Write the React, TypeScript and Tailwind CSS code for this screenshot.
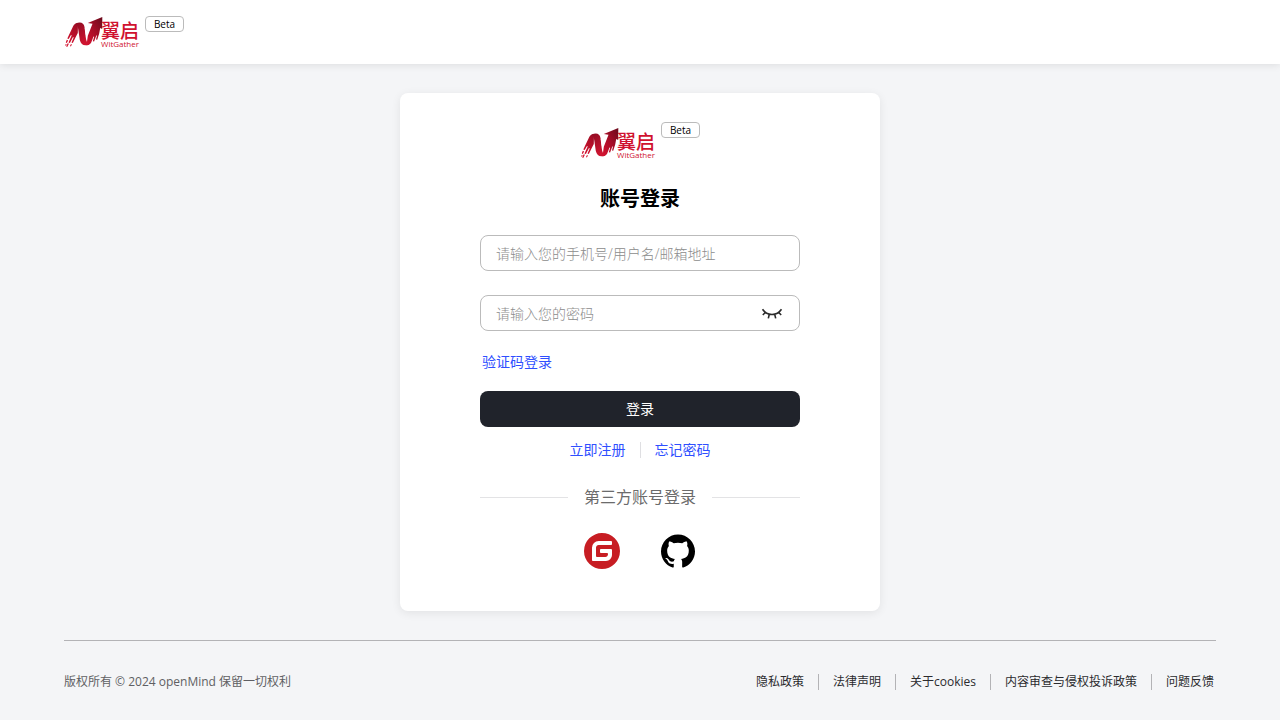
import { useState } from "react";
import { SiGitee, SiGithub } from "react-icons/si";

function LogoMark() {
  return (
    <svg width="76" height="32" viewBox="-1 -1 76 32" role="img" aria-label="翼启 WitGather">
      <defs>
        <linearGradient id="wingLeft" x1="0.6" y1="0" x2="0.2" y2="1">
          <stop offset="0" stopColor="#a00d25" />
          <stop offset="1" stopColor="#d3122f" />
        </linearGradient>
        <linearGradient id="wingBand" x1="0" y1="0" x2="0.4" y2="1">
          <stop offset="0" stopColor="#8f0c22" />
          <stop offset="1" stopColor="#cf1430" />
        </linearGradient>
        <linearGradient id="wingArrow" x1="0.1" y1="1" x2="0.9" y2="0">
          <stop offset="0" stopColor="#d3122f" />
          <stop offset="0.5" stopColor="#a80d27" />
          <stop offset="1" stopColor="#6e0a1c" />
        </linearGradient>
      </defs>
      <path
        d="M13 6C10.500 6 9 7.500 8 9.500L2.300 21.500l1.400.6L6 18l.7.400-3.200 7 1.400.7L8 20l.7.400-2.200 5 1.300.6 2.700-5.500 2.300-4.500z"
        fill="url(#wingLeft)"
      />
      <path
        d="M1.800 22.800.8 25.600l1 .4 1.300-2.600zM2.700 26.200l-1.500 3.300 1 .5 1.700-3.300zM6 27l-1 2 .9.400 1-2zM.7 27l-.5 1.500.8.300.7-1.500z"
        fill="#d3122f"
      />
      <path
        d="M21.500 28.300c3.200 0 4.500-2 5.300-4.300l1.700-4.500.7.300-1.400 4.400 1.300.4 2.200-6.200.7.200-1 3.800 1.200.3 2-6.200 1-5.500 2 1L37.300 0 22.800 6l4.700.7-4.700 12z"
        fill="url(#wingArrow)"
      />
      <path
        d="M10.500 6.800C15 4.200 18.800 5.500 19.500 10l1.200 10c.4 3.200 1.200 5.500 3.300 7.500-4.500 2-8 .5-9.200-4.500L13.500 14c-.4-3-.9-5.500-3-7.200z"
        fill="url(#wingBand)"
      />
      <path d="M19.800 11 23.500 9.500 20.800 18z" fill="#fff" />
      <text x="36" y="21" fontSize="19" fontWeight="500" fill="#d0122f" fontFamily="'Noto Sans CJK SC', sans-serif">
        翼启
      </text>
      <text x="36" y="30" fontSize="8" fill="#d0122f" fontFamily="'Open Sans', sans-serif">
        WitGather
      </text>
    </svg>
  );
}

function Beta() {
  return (
    <span className="flex h-4 w-[39px] items-center justify-center rounded-[4px] border border-[#bbbbbb] bg-white text-[10px] leading-none text-black">
      Beta
    </span>
  );
}

function ClosedEye() {
  return (
    <svg width="24" height="24" viewBox="0 0 24 24" fill="none" stroke="#2b2b2b" strokeWidth="1.600">
      <path d="M2.500 8.300C5 12 8.300 13.500 12 13.500s7-1.500 9.500-5.200M5.500 11.300 2.800 14M18.500 11.300l2.700 2.700M9.300 13.200l-1 4.200M14.700 13.200l1 4.200" />
    </svg>
  );
}

const policies = ["隐私政策", "法律声明", "关于cookies", "内容审查与侵权投诉政策", "问题反馈"];

export default function App() {
  const [visible, setVisible] = useState(false);

  return (
    <div className="flex min-h-screen flex-col bg-[#f4f5f7] font-['Open_Sans','Noto_Sans_CJK_SC',sans-serif] text-sm text-black">
      <header className="flex h-16 items-center bg-white px-16 shadow-[0_1px_8px_rgba(0,0,0,0.1)]">
        <a href="#" className="flex items-start gap-[5px]">
          <LogoMark />
          <Beta />
        </a>
      </header>

      <main className="flex flex-1 justify-center px-4 py-[29px]">
        <section className="w-full max-w-[480px] rounded-lg bg-white px-20 pt-[29px] pb-10 shadow-[0_2px_10px_rgba(0,0,0,0.08)]">
          <div className="flex items-start justify-center gap-[5px]">
            <div className="pt-[5px]">
              <LogoMark />
            </div>
            <Beta />
          </div>
          <h1 className="mt-[26px] text-center text-xl leading-7 font-bold">账号登录</h1>

          <form className="mt-[22px]" onSubmit={(e) => e.preventDefault()}>
            <input
              type="text"
              aria-label="账号"
              placeholder="请输入您的手机号/用户名/邮箱地址"
              className="block h-9 w-full rounded-lg border border-[#bbbbbb] px-[15px] font-light outline-none placeholder:text-[#8c8c8c]"
            />
            <div className="mt-6 flex h-9 items-center rounded-lg border border-[#bbbbbb] px-[15px]">
              <input
                type={visible ? "text" : "password"}
                aria-label="密码"
                placeholder="请输入您的密码"
                className="h-full min-w-0 flex-1 font-light outline-none placeholder:text-[#8c8c8c]"
              />
              <button type="button" aria-label="显示密码" onClick={() => setVisible(!visible)}>
                <ClosedEye />
              </button>
            </div>
            <a href="#" className="mt-5 ml-0.5 block w-fit leading-[22px] text-[#2f4fff]">
              验证码登录
            </a>
            <button type="submit" className="mt-[18px] h-9 w-full rounded-lg bg-[#20232b] text-white">
              登录
            </button>
          </form>

          <div className="mt-3 flex items-center justify-center gap-[14px] leading-[22px] text-[#2f4fff]">
            <a href="#">立即注册</a>
            <span className="h-4 w-px bg-[#dfdfe2]" />
            <a href="#">忘记密码</a>
          </div>

          <div className="mt-6 flex items-center gap-4 text-base leading-6 text-[#6b6b6b]">
            <span className="h-px flex-1 bg-[#e3e3e5]" />
            第三方账号登录
            <span className="h-px flex-1 bg-[#e3e3e5]" />
          </div>

          <div className="mt-6 flex items-center justify-center gap-10">
            <a href="#" aria-label="Gitee">
              <SiGitee size={36} color="#c71d23" />
            </a>
            <a href="#" aria-label="GitHub" className="flex size-9 items-center justify-center">
              <SiGithub size={34} />
            </a>
          </div>
        </section>
      </main>

      <footer className="mx-16 flex h-20 items-center justify-between border-t border-[#b3b3b6] pt-0.5 pr-0.5 text-xs">
        <p className="text-[#5f5f63]">版权所有 © 2024 openMind 保留一切权利</p>
        <nav className="flex items-center">
          {policies.map((name) => (
            <a
              key={name}
              href="#"
              className="border-l border-[#b3b3b6] px-[14px] leading-4 text-[#2b2b2e] first:border-l-0 last:pr-0"
            >
              {name}
            </a>
          ))}
        </nav>
      </footer>
    </div>
  );
}
